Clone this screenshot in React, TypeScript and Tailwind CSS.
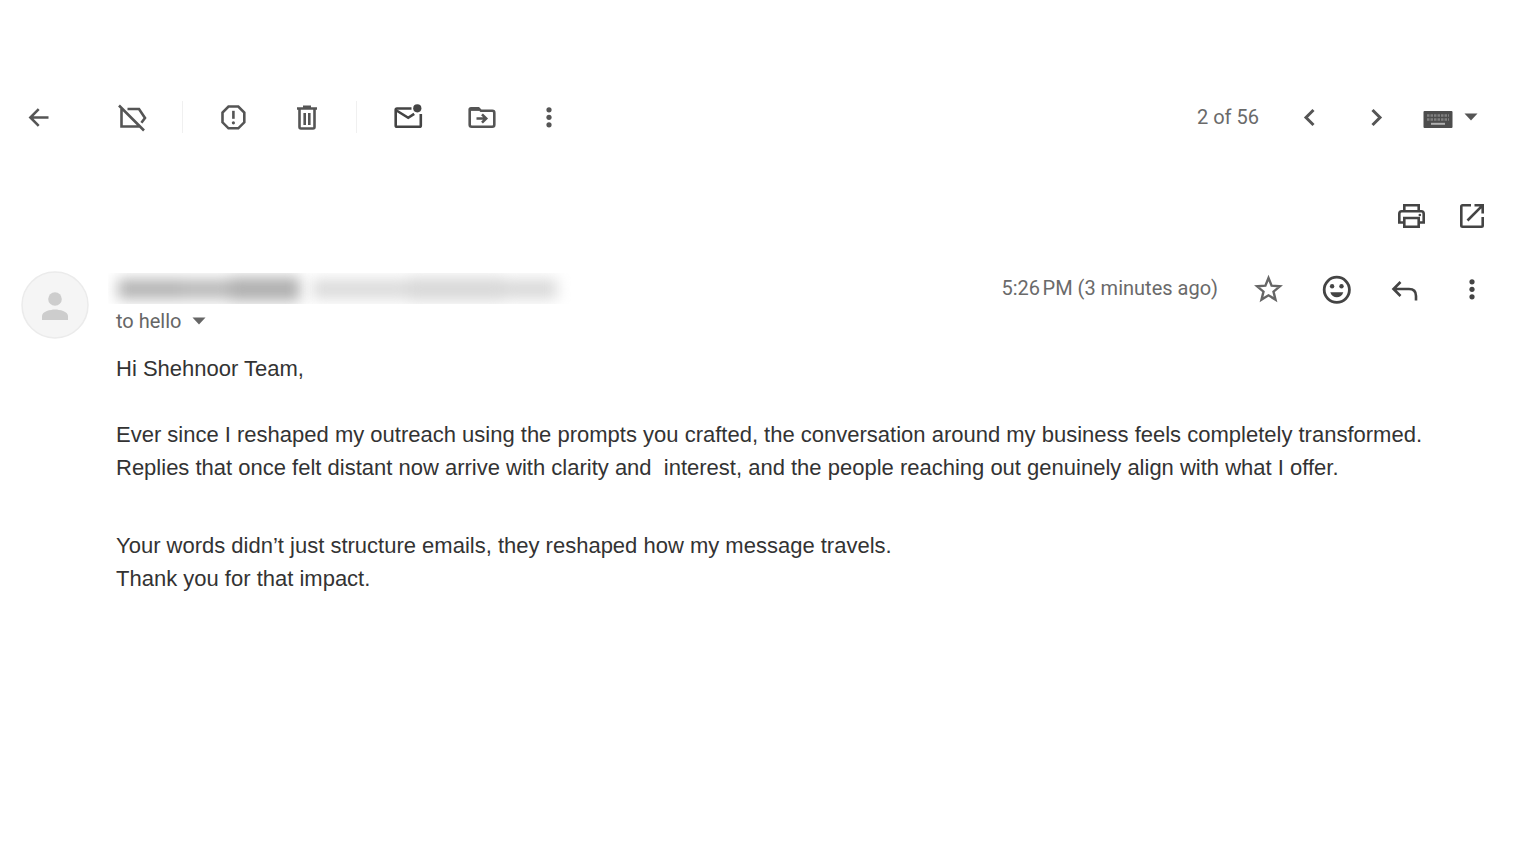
import type { ReactNode } from "react";

function Icon({ children, className = "" }: { children: ReactNode; className?: string }) {
  return (
    <svg viewBox="0 0 32 32" className={`size-8 shrink-0 ${className}`} fill="none" stroke="currentColor" strokeWidth="2.6" aria-hidden="true">
      {children}
    </svg>
  );
}

function IconButton({ label, className = "", children }: { label: string; className?: string; children: ReactNode }) {
  return (
    <button type="button" aria-label={label} title={label} className={`flex size-8 shrink-0 items-center justify-center ${className}`}>
      <Icon>{children}</Icon>
    </button>
  );
}

function MoreDots() {
  return (
    <g fill="currentColor" stroke="none">
      <circle cx="16" cy="8.8" r="2.6" />
      <circle cx="16" cy="16.3" r="2.6" />
      <circle cx="16" cy="23.800" r="2.6" />
    </g>
  );
}

function Caret() {
  return (
    <svg viewBox="0 0 14 8" className="h-2 w-3.5 shrink-0" fill="currentColor" aria-hidden="true">
      <path d="M0.5 0.5h13L7 7.5z" />
    </svg>
  );
}

function Toolbar() {
  return (
    <header className="flex items-center pr-[53px] pl-[22px] text-[#555]">
      <IconButton label="Back">
        <path d="M26.500 16.500H8M16.700 8.200l-8.300 8.300 8.300 8.300" />
      </IconButton>
      <IconButton label="Remove label" className="ml-[62px]">
        <path d="M3 4.500l25 25M5.500 8v17.500h18M11.500 8H23l6 9-3.600 4.800" />
      </IconButton>
      <div className="mx-[34px] h-8 w-px bg-[#f0f0f0]" />
      <div className="flex gap-[42px]">
        <IconButton label="Report spam">
          <path d="M11.500 5.500h9.800l6 6v9.800l-6 6h-9.800l-6-6v-9.800z" />
          <path d="M16.400 9.800v8" />
          <circle cx="16.400" cy="21.800" r="1.600" fill="currentColor" stroke="none" />
        </IconButton>
        <IconButton label="Delete">
          <path d="M6 7.500h20M12 5.700h8M8.500 7v19q0 1.500 1.500 1.500h12q1.500 0 1.500-1.500V7" />
          <path d="M13.700 12v12M18.300 12v12" />
        </IconButton>
      </div>
      <div className="mr-[35px] ml-[33px] h-8 w-px bg-[#f0f0f0]" />
      <div className="flex gap-[42px] text-[#444]">
        <IconButton label="Mark as unread">
          <path d="M19.500 7.500H5q-1.300 0-1.300 1.300v15.600q0 1.300 1.300 1.300h22.500q1.300 0 1.300-1.300V13" />
          <path d="M4.500 9.500l11.700 7.300 6-4" />
          <circle cx="25.300" cy="7.300" r="4.100" fill="currentColor" stroke="none" />
        </IconButton>
        <IconButton label="Move to" className="text-[#555]">
          <path d="M3.700 8v15.800q0 2 2 2h20.600q2 0 2-2V11.800q0-2-2-2H15l-2.500-2.500H5q-1.300 0-1.300 1.300z" />
          <path d="M4 8.600h9" />
          <path d="M10.500 17.500h9M16 13.300l4.200 4.200-4.200 4.200" strokeWidth="2.600" />
        </IconButton>
      </div>
      <IconButton label="More" className="ml-[35px]">
        <MoreDots />
      </IconButton>

      <span className="ml-auto font-['Roboto',sans-serif] text-[20px] leading-6 whitespace-nowrap text-[#6a6a6a]">2 of 56</span>
      <IconButton label="Newer" className="ml-[35px]">
        <path d="M19.500 9l-7.500 7.500 7.500 7.500" strokeWidth="3" />
      </IconButton>
      <IconButton label="Older" className="ml-[34px]">
        <path d="M12.500 9l7.500 7.500-7.500 7.500" strokeWidth="3" />
      </IconButton>
      <button type="button" aria-label="Input tools" className="ml-[30px] flex items-center gap-[10px]">
        <Icon>
          <rect x="1.500" y="10" width="29" height="17" rx="1" fill="#4d4d4d" stroke="none" />
          <path d="M5 14.500h22M5 18.500h22" stroke="#808080" strokeWidth="2.400" strokeDasharray="2.500 1" />
          <path d="M9 22.800h14" stroke="#b0b0b0" strokeWidth="2" />
        </Icon>
        <Caret />
      </button>
    </header>
  );
}

function PageActions() {
  return (
    <div className="mt-[67px] flex justify-end gap-[29px] pr-[43px] text-[#444]">
      <IconButton label="Print all">
        <path d="M9.300 11V5.300h14.400V11M9 22.500H4.300v-8.700q0-2.500 2.500-2.500h19.400q2.500 0 2.500 2.500v8.700H24" />
        <path d="M9.300 18h14.400v8.700H9.300z" />
        <circle cx="24.800" cy="15" r="1.300" fill="currentColor" stroke="none" />
      </IconButton>
      <IconButton label="In new window">
        <path d="M15 5.300H6.500q-1.200 0-1.200 1.200v19q0 1.200 1.200 1.200h19q1.200 0 1.200-1.200V17M18.500 5.300h8.200v8.200M26.300 5.700L11.500 20.500" />
      </IconButton>
    </div>
  );
}

function Avatar() {
  return (
    <svg viewBox="0 0 68 68" className="size-[68px] shrink-0" role="img" aria-label="Sender">
      <circle cx="34" cy="34" r="33" fill="#f5f5f5" stroke="#ebebeb" strokeWidth="1.500" />
      <circle cx="34" cy="28" r="6.800" fill="#cdcdcd" />
      <path d="M21 49v-4c0-4.500 8.500-6.500 13-6.500s13 2 13 6.500v4z" fill="#cdcdcd" />
    </svg>
  );
}

function HiddenSender() {
  return (
    <div className="-ml-2 flex h-[31px] w-[464px] items-center overflow-hidden pl-[10px]" aria-hidden="true">
      <div className="flex w-[182px] items-center blur-[7px]">
        <div className="h-5 w-16 bg-[#b4b4b4]" />
        <div className="h-5 w-12 bg-[#bababa]" />
        <div className="h-6 grow bg-[#b0b0b0]" />
      </div>
      <div className="ml-3 flex w-[245px] items-center blur-[7px]">
        <div className="h-5 w-24 bg-[#dcdcdc]" />
        <div className="h-6 w-24 bg-[#d9d9d9]" />
        <div className="h-5 grow bg-[#dadada]" />
      </div>
    </div>
  );
}

function Message() {
  return (
    <article className="mt-[39px] flex gap-[27px] pr-[43px] pl-[21px]">
      <Avatar />
      <div className="min-w-0 grow">
        <div className="flex items-start justify-between">
          <div className="pt-[2px]">
            <HiddenSender />
            <button type="button" className="mt-[5px] flex items-center gap-[11px] font-['Roboto',sans-serif] text-[20px] leading-6 text-[#666]">
              to hello
              <Caret />
            </button>
          </div>
          <div className="flex items-center pt-[2px] text-[#444]">
            <time className="pb-[3px] font-['Roboto',sans-serif] text-[20px] leading-6 whitespace-nowrap text-[#6a6a6a]">5:26&#8239;PM (3 minutes ago)</time>
            <div className="ml-[34px] flex gap-9">
              <IconButton label="Star" className="text-[#666]">
                <path d="M16.500 5l3.100 7.700 8.300.6-6.400 5.300 2 8-7-4.300-7 4.300 2-8-6.400-5.300 8.300-.6z" strokeWidth="2.400" />
              </IconButton>
              <IconButton label="Add reaction">
                <circle cx="16.800" cy="16.800" r="12.600" strokeWidth="2.800" />
                <g fill="currentColor" stroke="none">
                  <circle cx="12.100" cy="13.300" r="2.200" />
                  <circle cx="21.500" cy="13.300" r="2.200" />
                  <path d="M10.300 19.300h13c-1 3.300-3.500 5-6.500 5s-5.500-1.700-6.500-5z" />
                </g>
              </IconButton>
              <IconButton label="Reply">
                <path d="M12.500 9L5.500 16l7 7M5.500 16h15.500q7 0 7 7v4.500" />
              </IconButton>
              <IconButton label="More message options">
                <MoreDots />
              </IconButton>
            </div>
          </div>
        </div>
        <div className="mt-[19px] font-['Liberation_Sans',Arial,sans-serif] text-[22px] leading-[33px] text-[#333]">
          <p>Hi Shehnoor Team,</p>
          <p className="mt-[33px]">
            Ever since I reshaped my outreach using the prompts you crafted, the conversation around my business feels completely transformed.
            <br />
            Replies that once felt distant now arrive with clarity and&nbsp; interest, and the people reaching out genuinely align with what I offer.
          </p>
          <p className="mt-[45px]">
            Your words didn’t just structure emails, they reshaped how my message travels.
            <br />
            Thank you for that impact.
          </p>
        </div>
      </div>
    </article>
  );
}

export default function App() {
  return (
    <main className="min-h-screen bg-white pt-[101px]">
      <Toolbar />
      <PageActions />
      <Message />
    </main>
  );
}
